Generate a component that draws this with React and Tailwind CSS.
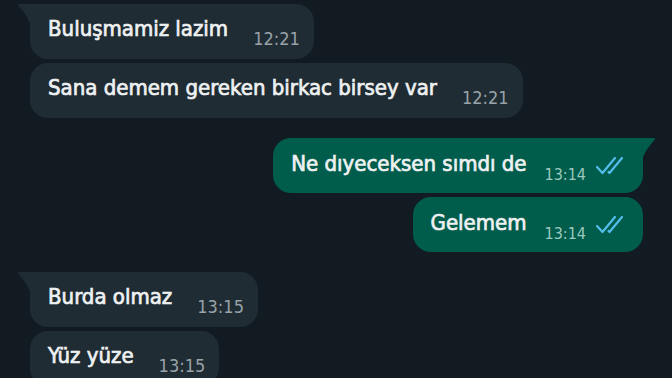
import React from 'react';

const messages = [
  { id: 1, out: false, tail: true, text: 'Buluşmamiz lazim', time: '12:21' },
  { id: 2, out: false, tail: false, text: 'Sana demem gereken birkac birsey var', time: '12:21' },
  { id: 3, out: true, tail: true, text: 'Ne dıyeceksen sımdı de', time: '13:14', gapTop: true },
  { id: 4, out: true, tail: false, text: 'Gelemem', time: '13:14' },
  { id: 5, out: false, tail: true, text: 'Burda olmaz', time: '13:15', gapTop: true },
  { id: 6, out: false, tail: false, text: 'Yüz yüze', time: '13:15' },
];

const narrow = { fontFamily: '"DejaVu Sans Condensed", "Liberation Sans", sans-serif' };

function Ticks() {
  return (
    <svg width="30" height="20" viewBox="0 0 30 20" className="ml-[9px] mt-[5px] shrink-0">
      <path d="M2 11 L7.5 17 L20 2" fill="none" stroke="#53bdeb" strokeWidth="2.2" strokeLinecap="round" strokeLinejoin="round" />
      <path d="M13.5 16 L14.5 17 L27 2" fill="none" stroke="#53bdeb" strokeWidth="2.2" strokeLinecap="round" strokeLinejoin="round" />
    </svg>
  );
}

function Bubble({ m }) {
  const bg = m.out ? 'bg-[#005c4b]' : 'bg-[#202c33]';
  const corner = m.tail ? (m.out ? 'rounded-tr-none' : 'rounded-tl-none') : '';
  return (
    <div className={`flex ${m.out ? 'justify-end' : 'justify-start'} ${m.gapTop ? 'mt-[20px]' : 'mt-[4px]'}`}>
      <div className={`relative h-[55px] flex items-start rounded-[18px] ${corner} ${bg} pl-[18px] ${m.out ? 'pr-[18px] pt-[13px]' : 'pr-[14px] pt-[12px]'}`}>
        {m.tail && !m.out && (
          <svg width="14" height="22" viewBox="0 0 14 22" className="absolute left-[-13px] top-0">
            <path d="M14 0 L3 0 Q0 0 1.5 2 C6 7 11 13 14 22 Z" fill="#202c33" />
          </svg>
        )}
        {m.tail && m.out && (
          <svg width="14" height="22" viewBox="0 0 14 22" className="absolute right-[-13px] top-0">
            <path d="M0 0 L11 0 Q14 0 12.5 2 C8 7 3 13 0 22 Z" fill="#005c4b" />
          </svg>
        )}
        <span className="text-[22px] leading-[26px] font-normal text-[#eef1f2] whitespace-nowrap [-webkit-text-stroke:0.7px_#eef1f2]" style={narrow}>
          {m.text}
        </span>
        <span
          className={`whitespace-nowrap ${m.out ? 'ml-[18px] mt-[14px] text-[16px] leading-[20px] text-[#9cc9bd]' : 'ml-[25px] mt-[11px] text-[18px] leading-[24px] text-[#99a3a9]'}`}
          style={narrow}
        >
          {m.time}
        </span>
        {m.out && <Ticks />}
      </div>
    </div>
  );
}

export default function App() {
  return (
    <div className="w-[672px] h-[378px] overflow-hidden bg-[#111b21] pl-[30px] pr-[29px] pt-0">
      {messages.map((m) => (
        <Bubble key={m.id} m={m} />
      ))}
    </div>
  );
}
